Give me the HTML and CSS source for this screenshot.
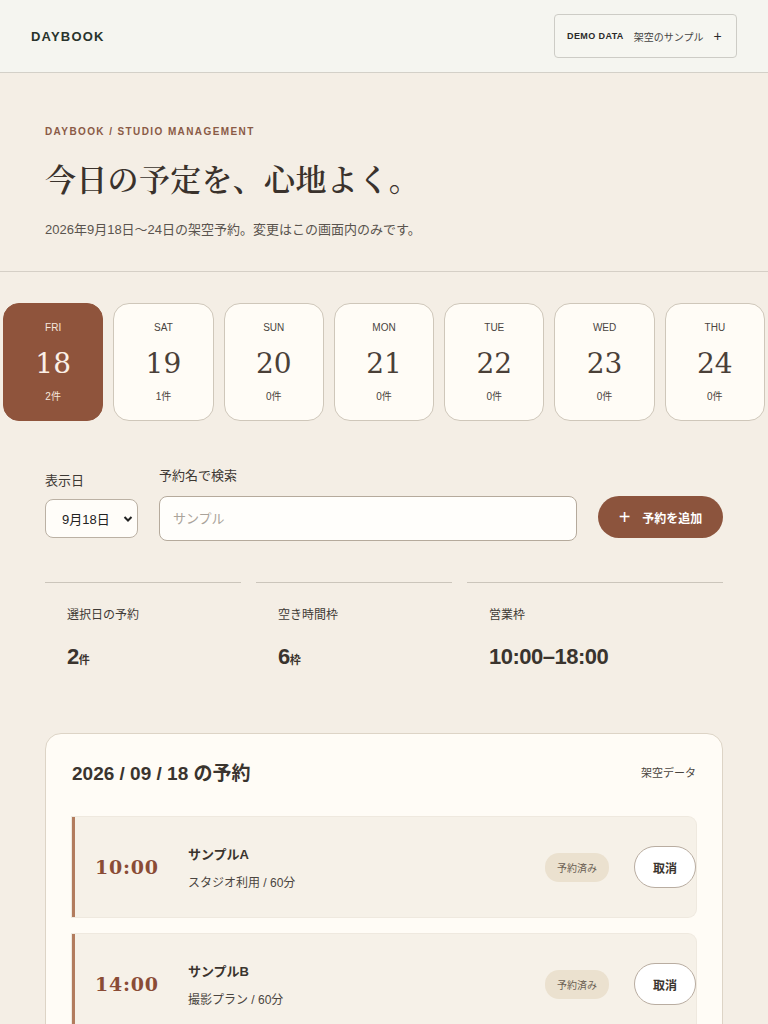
FILE: index.html
```html
<!DOCTYPE html>
<html lang="ja">
<head>
<meta charset="utf-8">
<title>Daybook</title>
<link rel="stylesheet" href="styles.css">
</head>
<body>
<header class="topbar">
  <div class="brand">DAYBOOK</div>
  <button class="demo-btn"><span class="demo-tag">DEMO DATA</span><span class="demo-text">架空のサンプル</span><span class="demo-plus">+</span></button>
</header>
<section class="hero">
  <p class="eyebrow">DAYBOOK / STUDIO MANAGEMENT</p>
  <h1 class="hero-title">今日の予定を、心地よく。</h1>
  <p class="hero-sub">2026年9月18日〜24日の架空予約。変更はこの画面内のみです。</p>
</section>
<nav class="days">
  <div class="day active"><span class="dow">FRI</span><span class="num">18</span><span class="cnt">2件</span></div>
  <div class="day"><span class="dow">SAT</span><span class="num">19</span><span class="cnt">1件</span></div>
  <div class="day"><span class="dow">SUN</span><span class="num">20</span><span class="cnt">0件</span></div>
  <div class="day"><span class="dow">MON</span><span class="num">21</span><span class="cnt">0件</span></div>
  <div class="day"><span class="dow">TUE</span><span class="num">22</span><span class="cnt">0件</span></div>
  <div class="day"><span class="dow">WED</span><span class="num">23</span><span class="cnt">0件</span></div>
  <div class="day"><span class="dow">THU</span><span class="num">24</span><span class="cnt">0件</span></div>
</nav>
<section class="controls">
  <label class="field field-date"><span class="field-label">表示日</span>
    <span class="select"><span>9月18日</span><svg width="10" height="8" viewBox="0 0 10 8"><path d="M1.5 2 L5 5.5 L8.5 2" fill="none" stroke="#222" stroke-width="2"/></svg></span>
  </label>
  <label class="field field-search"><span class="field-label">予約名で検索</span>
    <input class="search" type="text" placeholder="サンプル">
  </label>
  <button class="add-btn"><span class="add-plus">+</span>予約を追加</button>
</section>
<section class="stats">
  <div class="stat"><span class="stat-label">選択日の予約</span><span class="stat-value">2<small>件</small></span></div>
  <div class="stat"><span class="stat-label">空き時間枠</span><span class="stat-value">6<small>枠</small></span></div>
  <div class="stat"><span class="stat-label">営業枠</span><span class="stat-value">10:00–18:00</span></div>
</section>
<section class="panel">
  <div class="panel-head"><h2>2026 / 09 / 18 の予約</h2><span class="panel-note">架空データ</span></div>
  <div class="rows">
    <div class="row">
      <span class="time">10:00</span>
      <div class="info"><span class="name">サンプルA</span><span class="desc">スタジオ利用 / 60分</span></div>
      <span class="badge">予約済み</span>
      <button class="cancel">取消</button>
    </div>
    <div class="row">
      <span class="time">14:00</span>
      <div class="info"><span class="name">サンプルB</span><span class="desc">撮影プラン / 60分</span></div>
      <span class="badge">予約済み</span>
      <button class="cancel">取消</button>
    </div>
  </div>
</section>
</body>
</html>
```
FILE: styles.css
```css
* { box-sizing: border-box; }
body {
  margin: 0;
  background: #f4eee5;
  color: #3a3632;
  font-family: "Liberation Sans", "Noto Sans CJK JP", sans-serif;
}
.topbar {
  display: flex;
  justify-content: space-between;
  align-items: center;
  height: 73px;
  padding: 0 31px;
  background: #f5f5f0;
  border-bottom: 1px solid #d3d0c8;
}
.brand {
  font-size: 13px;
  font-weight: 700;
  letter-spacing: 1.2px;
  color: #28332c;
}
.demo-btn {
  display: flex;
  align-items: center;
  height: 44px;
  width: 183px;
  padding: 0 12px;
  background: #f6f6f1;
  border: 1px solid #cdccc6;
  border-radius: 4px;
  font-family: inherit;
  color: #2a2a2a;
}
.demo-tag { font-size: 9px; font-weight: 700; letter-spacing: 0.4px; }
.demo-text { font-size: 10px; margin-left: 10px; color: #444; }
.demo-plus { font-size: 14px; margin-left: 10px; }
.hero {
  padding: 53px 45px 0;
  height: 199px;
  border-bottom: 1px solid #d5cfc6;
}
.eyebrow {
  margin: 0;
  font-size: 10px;
  font-weight: 700;
  letter-spacing: 1.4px;
  color: #8a5a46;
}
.hero-title {
  margin: 22px 0 0;
  font-family: "Noto Serif CJK JP", "Liberation Serif", serif;
  font-size: 31px;
  font-weight: 600;
  letter-spacing: 0.3px;
  color: #3a322c;
  line-height: 1.2;
}
.hero-sub {
  margin: 23px 0 0;
  font-size: 13px;
  color: #5a544e;
}
.days {
  display: grid;
  grid-template-columns: repeat(7, 1fr);
  gap: 10px;
  padding: 31px 3px 0;
}
.day {
  height: 118px;
  display: flex;
  flex-direction: column;
  align-items: center;
  background: #fffcf6;
  border: 1px solid #cfc7ba;
  border-radius: 16px;
  padding-top: 18px;
  color: #4a4440;
}
.day.active {
  background: #8f543c;
  border-color: #8f543c;
  color: #f5e7dc;
}
.dow { font-size: 10px; }
.num {
  font-family: "DejaVu Serif", serif;
  font-size: 28px;
  margin-top: 17px;
  line-height: 1;
  color: #4a4038;
}
.day.active .num { color: #fbefe6; }
.cnt { font-size: 10px; margin-top: 10px; }
.controls {
  display: flex;
  align-items: flex-end;
  gap: 21px;
  padding: 44px 45px 0;
}
.field { display: flex; flex-direction: column; }
.field-label { font-size: 13px; color: #3d3833; }
.field-date .field-label { margin-bottom: 10px; }
.field-search .field-label { margin-bottom: 12px; }
.select {
  display: flex;
  align-items: center;
  justify-content: space-between;
  width: 93px;
  height: 39px;
  padding: 0 4px 0 16px;
  background: #fffdf9;
  border: 1px solid #bbb1a4;
  border-radius: 8px;
  font-size: 13px;
  color: #222;
  margin-bottom: 3px;
}
.field-search { flex: 1; }
.search {
  height: 45px;
  width: 100%;
  padding: 0 13px;
  background: #fffefb;
  border: 1px solid #b5aa9c;
  border-radius: 8px;
  font-family: inherit;
  font-size: 13px;
}
.search::placeholder { color: #aaa39a; }
.add-btn {
  display: flex;
  align-items: center;
  justify-content: center;
  width: 125px;
  height: 42px;
  margin-bottom: 3px;
  background: #8c543d;
  border: none;
  border-radius: 21px;
  color: #fff;
  font-family: inherit;
  font-size: 12px;
  font-weight: 700;
}
.add-plus { font-size: 20px; font-weight: 300; margin-right: 12px; line-height: 1; }
.stats {
  display: grid;
  grid-template-columns: 196px 196px 1fr;
  gap: 15px;
  padding: 41px 45px 0;
}
.stat {
  display: flex;
  flex-direction: column;
  border-top: 1px solid #cbc5bb;
  padding: 22px 22px 0;
  height: 120px;
}
.stat-label { font-size: 12px; color: #3f3a35; }
.stat-value {
  margin-top: 22px;
  font-size: 22px;
  font-weight: 700;
  letter-spacing: -0.5px;
  color: #3a342e;
}
.stat-value small { font-size: 11px; font-weight: 700; letter-spacing: 0; }
.panel {
  margin: 31px 45px 0;
  background: #fffcf6;
  border: 1px solid #ddd4c6;
  border-radius: 16px;
  padding: 24px 26px 20px;
}
.panel-head {
  display: flex;
  justify-content: space-between;
  align-items: center;
}
.panel-head h2 {
  margin: 0;
  font-size: 19px;
  font-weight: 700;
  color: #3a342e;
}
.panel-note { font-size: 11px; color: #4a4540; }
.rows {
  display: flex;
  flex-direction: column;
  gap: 17px;
  margin-top: 32px;
}
.row {
  display: flex;
  align-items: center;
  height: 100px;
  background: #f6f1e8;
  border-left: 3px solid #b27c5e;
  border-radius: 0 8px 8px 0;
  padding-left: 20px;
  box-shadow: 0 0 0 1px #efe9df;
}
.time {
  width: 93px;
  font-family: "DejaVu Serif", serif;
  font-size: 19px;
  font-weight: 700;
  letter-spacing: 0.8px;
  color: #8a4c36;
}
.info { display: flex; flex-direction: column; flex: 1; }
.name { font-size: 13px; font-weight: 700; color: #3a342e; }
.desc { font-size: 12px; margin-top: 10px; color: #4a4540; }
.badge {
  background: #ebe1cf;
  border-radius: 14px;
  padding: 7px 12px;
  font-size: 10px;
  color: #6a5e52;
}
.cancel {
  margin-left: 25px;
  width: 62px;
  height: 42px;
  background: #fff;
  border: 1px solid #b9ada1;
  border-radius: 21px;
  font-family: inherit;
  font-size: 12px;
  font-weight: 700;
  color: #3a342e;
}
```
